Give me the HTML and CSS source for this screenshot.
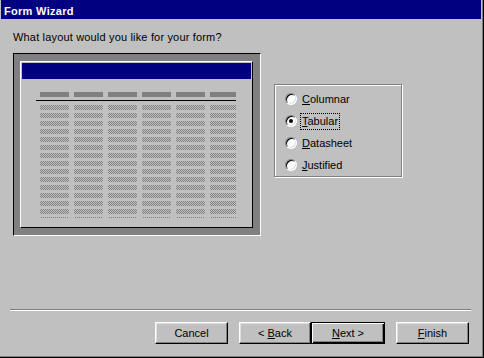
FILE: index.html
```html
<!DOCTYPE html>
<html>
<head>
<meta charset="utf-8">
<link rel="stylesheet" href="styles.css">
</head>
<body>
<div class="window">
  <div class="titlebar">Form Wizard</div>
  <div class="main">
    <p class="question">What layout would you like for your form?</p>
    <div class="layout-row">
      <div class="preview">
        <div class="form">
          <div class="form-title"></div>
          <div class="col-heads"></div>
          <div class="rule"></div>
          <div class="data"></div>
        </div>
      </div>
      <div class="options">
        <div class="option"><span class="radio"></span><span class="label"><u>C</u>olumnar</span></div>
        <div class="option"><span class="radio checked"><span class="dot"></span></span><span class="label focus"><u>T</u>abular</span></div>
        <div class="option"><span class="radio"></span><span class="label"><u>D</u>atasheet</span></div>
        <div class="option"><span class="radio"></span><span class="label"><u>J</u>ustified</span></div>
      </div>
    </div>
  </div>
  <div class="footer">
    <div class="separator"></div>
    <div class="buttons">
      <button class="btn btn-cancel">Cancel</button>
      <button class="btn btn-back">&lt; <u>B</u>ack</button>
      <button class="btn btn-next default"><u>N</u>ext &gt;</button>
      <button class="btn btn-finish"><u>F</u>inish</button>
    </div>
  </div>
</div>
</body>
</html>
```

FILE: styles.css
```css
* { box-sizing: border-box; }

body {
  margin: 0;
  font-family: "Liberation Sans", Arial, sans-serif;
  font-size: 11px;
  color: #000;
}

.window {
  width: 484px;
  height: 358px;
  background: #c0c0c0;
  border-right: 1px solid #000;
  border-bottom: 1px solid #000;
  box-shadow: inset -1px -1px 0 #808080;
  padding: 0 2px 1px 1px;
  display: flex;
  flex-direction: column;
}

.titlebar {
  height: 19px;
  background: #000080;
  color: #fff;
  font-weight: bold;
  line-height: 16px;
  padding: 3px 0 0 3px;
  letter-spacing: 0.3px;
}

.main {
  flex: 1;
  padding: 12px 12px 0 12px;
}

.question {
  margin: 0;
  line-height: 13px;
  height: 13px;
  letter-spacing: 0.17px;
}

.layout-row {
  display: flex;
  align-items: flex-start;
  margin-top: 9px;
}

.preview {
  width: 248px;
  height: 183px;
  background: #808080;
  border-style: solid;
  border-width: 1px;
  border-color: #000 #fff #fff #000;
  padding: 7px 7px 7px 6px;
}

.form {
  width: 233px;
  height: 167px;
  background: #c0c0c0;
  border: 1px solid;
  border-color: #fff #000 #000 #fff;
  padding: 1px;
}

.form-title {
  height: 16px;
  background: #000080;
}

.col-heads {
  margin: 13px 0 0 18px;
  width: 196px;
  height: 5px;
  background:
    repeating-linear-gradient(90deg, transparent 0 29px, #c0c0c0 29px 34px),
    #808080;
}

.rule {
  margin: 3px 0 0 14px;
  width: 200px;
  height: 1px;
  background: #000;
}

.data {
  margin: 4px 0 0 18px;
  width: 196px;
  height: 113px;
  background-image:
    repeating-linear-gradient(90deg, transparent 0 29px, #c0c0c0 29px 34px),
    repeating-linear-gradient(180deg, transparent 0 5px, #c0c0c0 5px 8px),
    conic-gradient(#808080 25%, #c0c0c0 0 50%, #808080 0 75%, #c0c0c0 0);
  background-size: auto, auto, 2px 2px;
}

.options {
  margin: 31px 0 0 13px;
  width: 128px;
  height: 93px;
  border: 1px solid #808080;
  box-shadow: inset 1px 1px 0 #fff, 1px 1px 0 #fff;
  padding: 3px 0 0 10px;
}

.option {
  display: flex;
  align-items: center;
  height: 22px;
}

.radio {
  width: 12px;
  height: 12px;
  border-radius: 50%;
  border: 1px solid;
  border-color: #808080 #fff #fff #808080;
  background: #fff;
  box-shadow: inset 1px 1px 0 #000, inset -1px -1px 0 #dfdfdf;
  margin-right: 3px;
  display: flex;
  align-items: center;
  justify-content: center;
  flex: none;
}

.dot {
  width: 4px;
  height: 4px;
  border-radius: 50%;
  background: #000;
}

.label {
  border: 1px dotted transparent;
  padding: 1px;
  line-height: 13px;
}

.label.focus {
  border-color: #000;
}

.footer {
  padding-bottom: 12px;
}

.separator {
  height: 2px;
  border-top: 1px solid #808080;
  border-bottom: 1px solid #fff;
  margin: 0 10px 0 9px;
}

.buttons {
  display: flex;
  margin-top: 11px;
  padding-left: 154px;
}

.btn {
  height: 22px;
  font: inherit;
  color: #000;
  background: #c0c0c0;
  border: 1px solid;
  border-color: #fff #000 #000 #fff;
  box-shadow: inset -1px -1px 0 #808080, inset 1px 1px 0 #dfdfdf;
  padding: 0;
  margin: 0;
  line-height: 13px;
}

.btn-cancel { width: 73px; margin-right: 11px; }
.btn-back { width: 72px; }
.btn-next { width: 74px; margin-right: 11px; }
.btn-finish { width: 73px; }

.btn.default {
  border: 1px solid #000;
  box-shadow: inset 1px 1px 0 #fff, inset -1px -1px 0 #000, inset -2px -2px 0 #808080;
}
```
